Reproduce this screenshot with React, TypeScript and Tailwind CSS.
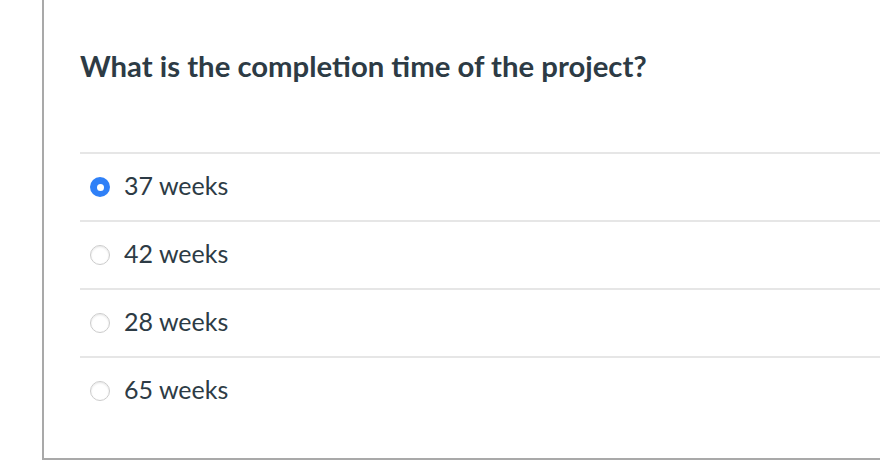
import React from 'react';

const options = ['37 weeks', '42 weeks', '28 weeks', '65 weeks'];

function Radio({ checked }: { checked: boolean }) {
  if (checked) {
    return (
      <span className="flex h-[20px] w-[20px] shrink-0 items-center justify-center rounded-full bg-[#2f80f7]">
        <span className="h-[7px] w-[7px] rounded-full bg-white" />
      </span>
    );
  }
  return (
    <span className="h-[20px] w-[20px] shrink-0 rounded-full border border-[#cccccc] bg-white shadow-[inset_0_1px_2px_rgba(0,0,0,0.1)]" />
  );
}

export default function App() {
  const [selected, setSelected] = React.useState(0);

  return (
    <div className="h-[470px] w-[880px] overflow-hidden bg-white pl-[42px] font-['Lato','Liberation_Sans',sans-serif] text-[#2d3b45]">
      <div className="h-[460px] border-b-2 border-l-2 border-[#a9a9a9] pl-[36px]">
        <div className="flex h-[152px] items-start pt-[46px]">
          <h2 className="text-[29.3px] font-bold leading-[40px]">
            What is the completion time of the project?
          </h2>
        </div>
        <div>
          {options.map((option, index) => (
            <label
              key={option}
              onClick={() => setSelected(index)}
              className="flex h-[68px] cursor-pointer items-center gap-[14px] border-t-2 border-[#e6e6e6] pl-[10px]"
            >
              <Radio checked={selected === index} />
              <span className="pb-[3px] text-[25px] leading-none">{option}</span>
            </label>
          ))}
        </div>
      </div>
    </div>
  );
}
